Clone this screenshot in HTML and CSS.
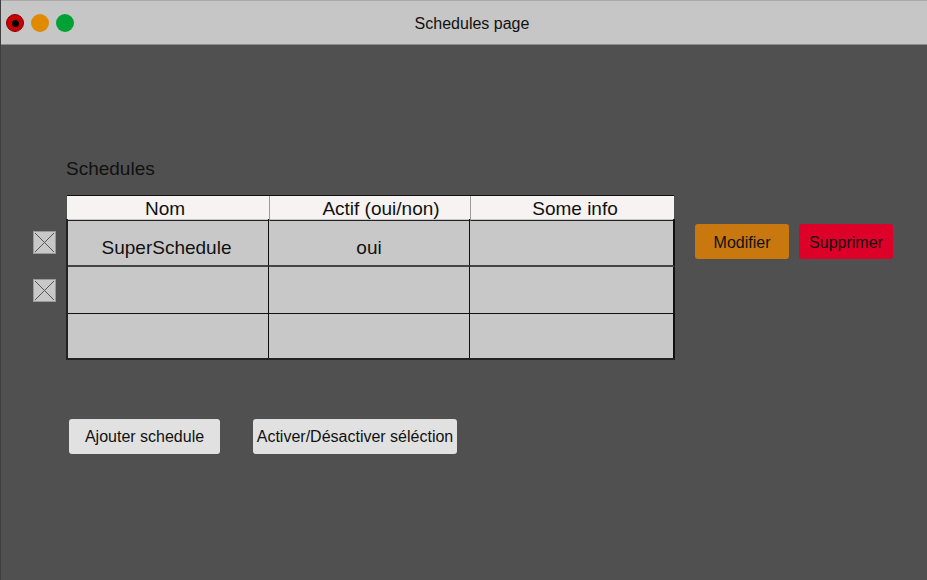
FILE: index.html
```html
<!DOCTYPE html>
<html lang="fr">
<head>
<meta charset="utf-8">
<title>Schedules page</title>
<link rel="stylesheet" href="styles.css">
</head>
<body>
<div class="window">
  <header class="titlebar">
    <div class="lights">
      <span class="light red"><span class="dot"></span></span>
      <span class="light orange"></span>
      <span class="light green"></span>
    </div>
    <div class="title">Schedules page</div>
  </header>
  <main class="content">
    <div class="heading">Schedules</div>
    <div class="main">
      <div class="checks">
        <span class="check"><svg viewBox="0 0 23 23" width="23" height="23"><path d="M2 2 L21 21 M21 2 L2 21" stroke="#555" stroke-width="1" fill="none"/></svg></span>
        <span class="check"><svg viewBox="0 0 23 23" width="23" height="23"><path d="M2 2 L21 21 M21 2 L2 21" stroke="#555" stroke-width="1" fill="none"/></svg></span>
      </div>
      <div class="table">
        <div class="thead">
          <div class="th th-name">Nom</div>
          <div class="th th-active">Actif (oui/non)</div>
          <div class="th th-info">Some info</div>
        </div>
        <div class="tbody">
          <div class="td r1">SuperSchedule</div>
          <div class="td r1">oui</div>
          <div class="td r1"></div>
          <div class="td r2"></div>
          <div class="td r2"></div>
          <div class="td r2"></div>
          <div class="td r3"></div>
          <div class="td r3"></div>
          <div class="td r3"></div>
        </div>
      </div>
      <div class="actions">
        <button class="btn modify">Modifier</button>
        <button class="btn delete">Supprimer</button>
      </div>
    </div>
    <div class="bottom">
      <button class="btn light-btn add">Ajouter schedule</button>
      <button class="btn light-btn toggle">Activer/Désactiver séléction</button>
    </div>
  </main>
</div>
</body>
</html>
```
FILE: styles.css
```css
* { box-sizing: border-box; }
html, body {
  margin: 0;
  padding: 0;
  height: 100%;
}
body {
  background: #505050;
  font-family: "Liberation Sans", Arial, sans-serif;
  color: #111;
}
.window {
  height: 580px;
  border-left: 1px solid #3e3e3e;
}
.titlebar {
  height: 45px;
  background: #c6c6c6;
  border-top: 1px solid #a9a9a9;
  border-bottom: 1px solid #8c8c8c;
  display: flex;
  align-items: center;
}
.lights {
  display: flex;
  gap: 6px;
  padding-left: 5px;
  padding-top: 1px;
  align-items: center;
}
.light {
  width: 18px;
  height: 18px;
  border-radius: 50%;
  display: flex;
  align-items: center;
  justify-content: center;
}
.light.red { background: #c60000; border: 1px solid #8a0000; }
.light.orange { background: #e08a00; margin-left: 1px; }
.light.green { background: #00a135; margin-left: 1px; }
.dot {
  width: 7px;
  height: 7px;
  border-radius: 50%;
  background: #000;
}
.title {
  flex: 1;
  text-align: center;
  font-size: 16px;
  padding-right: 57px;
  padding-top: 3px;
  color: #111;
}
.content {
  padding-top: 113px;
}
.heading {
  margin-left: 65px;
  font-size: 19px;
  line-height: 22px;
  height: 22px;
}
.main {
  display: flex;
  margin-top: 15px;
  margin-left: 32px;
}
.checks {
  display: flex;
  flex-direction: column;
  gap: 25px;
  padding-top: 36px;
  width: 23px;
}
.check {
  width: 23px;
  height: 23px;
  background: #c8c8c8;
  border: 1px solid #9a9a9a;
  display: block;
}
.check svg { display: block; margin: -1px; }
.table {
  margin-left: 10px;
  width: 609px;
}
.thead {
  margin-left: 1px;
  width: 607px;
  display: grid;
  grid-template-columns: 202px 201px 204px;
  background: #f6f3f2;
  border-top: 1px solid #111;
  height: 24px;
}
.th {
  text-align: center;
  font-size: 19px;
  line-height: 23px;
  padding-top: 1px;
  border-bottom: 1px solid #222;
}
.th + .th { border-left: 1px solid #9a9a9a; }
.th-name { padding-right: 6px; }
.th-active { padding-left: 22px; }
.th-info { padding-left: 5px; }
.tbody {
  display: grid;
  grid-template-columns: 201px 201px 205px;
  background: #c8c8c8;
  border-left: 2px solid #222;
  border-bottom: 2px solid #222;
  width: 609px;
}
.td {
  border-right: 1px solid #111;
  border-bottom: 1px solid #111;
  text-align: center;
  font-size: 19px;
  line-height: 22px;
}
.td.r1 { height: 48px; padding-top: 18px; border-bottom: 2px solid #444; }
.td.r1:first-child { padding-right: 3px; }
.td.r2 { height: 47px; }
.td.r3 { height: 44px; border-bottom: none; }
.td:nth-child(3n) { border-right: 2px solid #111; }
.actions {
  display: flex;
  gap: 10px;
  margin-left: 20px;
  padding-top: 29px;
  align-items: flex-start;
}
.btn {
  font-family: "Liberation Sans", Arial, sans-serif;
  font-size: 16px;
  color: #111;
  border: none;
  border-radius: 3px;
  height: 35px;
  padding: 0;
  cursor: pointer;
}
.modify { width: 94px; background: #c8780e; padding-top: 2px; }
.delete { width: 94px; background: #dd0029; padding-top: 2px; }
.bottom {
  display: flex;
  gap: 33px;
  margin-top: 59px;
  margin-left: 68px;
}
.light-btn { background: #e1e1e1; }
.add { width: 151px; }
.toggle { width: 204px; }
```
